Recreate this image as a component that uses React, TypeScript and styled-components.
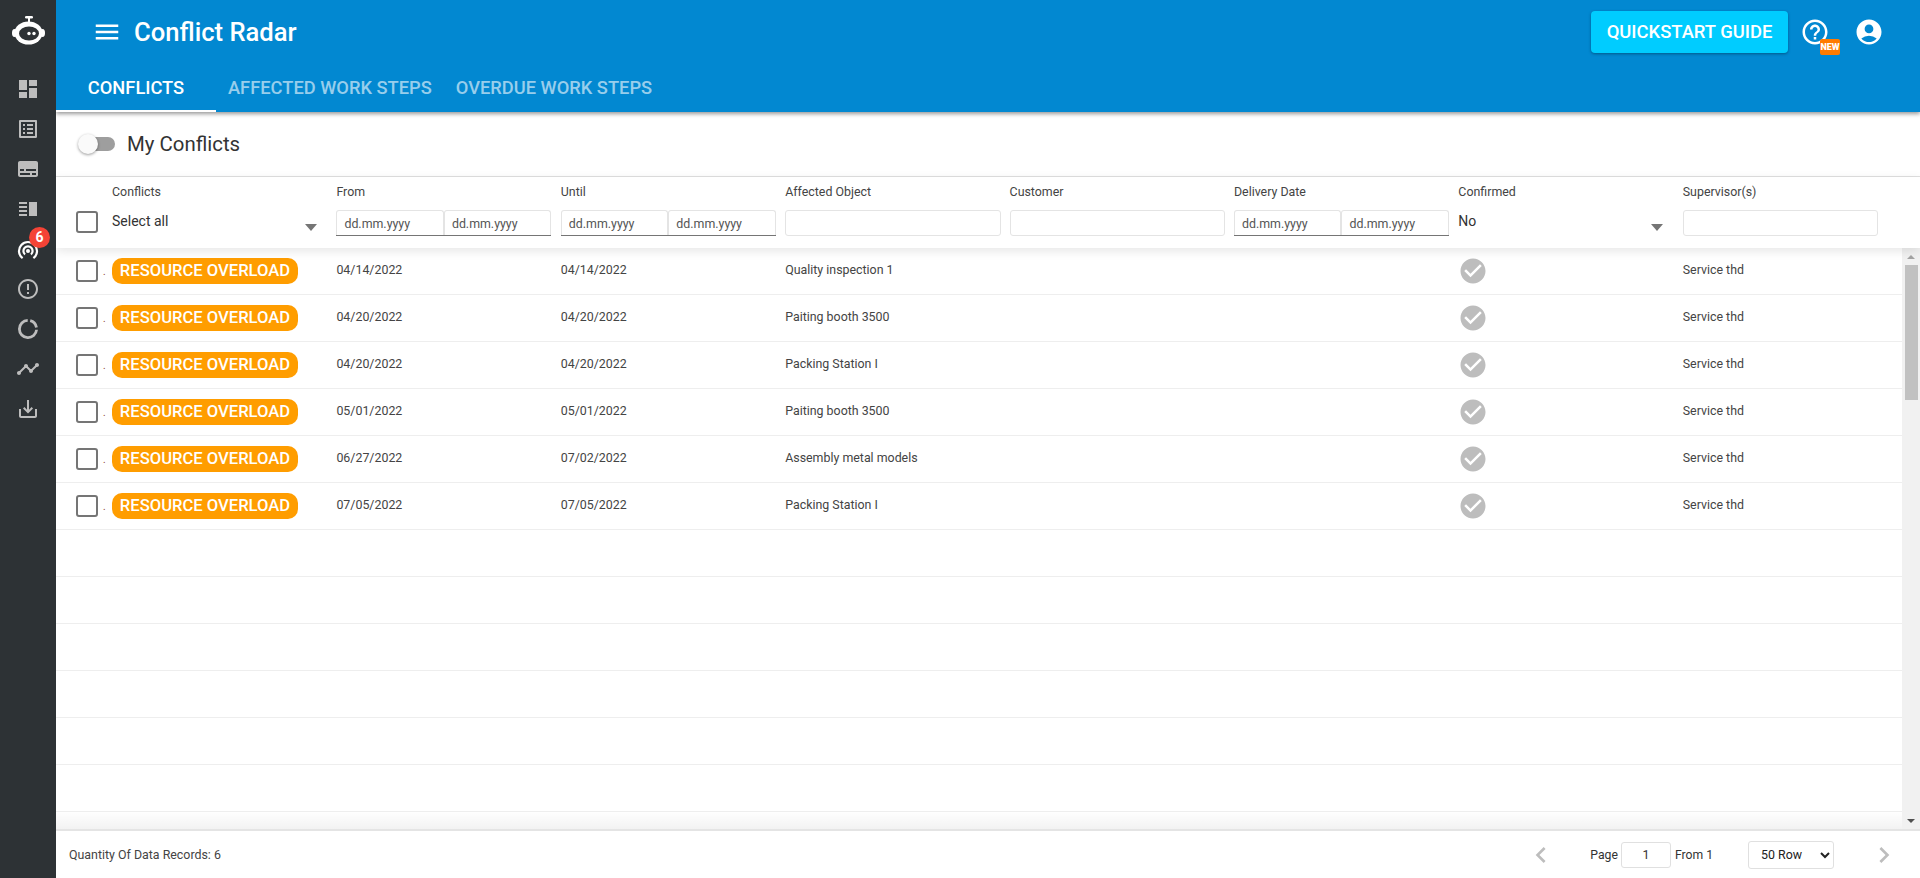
import { FC } from "react";
import styled, { createGlobalStyle } from "styled-components";
import {
  MdAccountCircle,
  MdCheckCircle,
  MdChevronLeft,
  MdChevronRight,
  MdDashboard,
  MdErrorOutline,
  MdHelpOutline,
  MdMenu,
  MdOutlineListAlt,
  MdOutlineSaveAlt,
  MdSubtitles,
  MdTimeline,
  MdVerticalSplit,
} from "react-icons/md";

const GlobalStyle = createGlobalStyle`
  html, body {
    margin: 0;
    height: 100%;
    background: #fff;
    font-family: Roboto, "Liberation Sans", sans-serif;
    color: #3c3c3c;
  }
  * {
    box-sizing: border-box;
  }
`;

const Shell = styled.div`
  display: flex;
  height: 100vh;
  overflow: hidden;
`;

const Sidebar = styled.nav`
  flex: 0 0 56px;
  display: flex;
  flex-direction: column;
  align-items: center;
  background: #2d3235;
  padding-top: 13px;
  z-index: 3;
`;

const Logo = styled.svg`
  width: 36px;
  height: 36px;
  margin-bottom: 20px;
`;

const NavItem = styled.div<{ $active?: boolean }>`
  position: relative;
  width: 56px;
  height: 40px;
  display: flex;
  align-items: center;
  justify-content: center;
  font-size: 24px;
  color: ${(p) => (p.$active ? "#fff" : "#bdbdbd")};
`;

const NavGlyph = styled.svg<{ $drop?: number }>`
  width: 24px;
  height: 24px;
  margin-top: ${(p) => p.$drop ?? 0}px;
`;

const NavBadge = styled.span`
  position: absolute;
  top: -2px;
  left: 29px;
  width: 21px;
  height: 21px;
  border-radius: 50%;
  background: #f44336;
  color: #fff;
  font-size: 14px;
  font-weight: 700;
  line-height: 21px;
  text-align: center;
`;

const Main = styled.main`
  flex: 1;
  min-width: 0;
  display: flex;
  flex-direction: column;
`;

const Header = styled.header`
  flex: 0 0 112px;
  background: #0288d1;
  color: #fff;
  box-shadow: 0 2px 4px rgba(0, 0, 0, 0.4);
  z-index: 2;
`;

const TopBar = styled.div`
  height: 64px;
  display: flex;
  align-items: center;
  padding-left: 36px;
`;

const MenuButton = styled.div`
  font-size: 30px;
  display: flex;
  margin-right: 12px;
`;

const Title = styled.h1`
  flex: 1;
  margin: 0;
  font-size: 25.6px;
  font-weight: 500;
`;

const GuideButton = styled.div`
  width: 197px;
  height: 42px;
  margin-right: 12px;
  border-radius: 4px;
  background: #00ccff;
  box-shadow: 0 1px 3px rgba(0, 0, 0, 0.35);
  font-size: 18.4px;
  font-weight: 500;
  line-height: 42px;
  text-align: center;
`;

const TopIcon = styled.div`
  position: relative;
  display: flex;
  font-size: 30px;
  margin-right: 24px;
  &:last-child {
    margin-right: 36px;
  }
`;

const NewTag = styled.span`
  position: absolute;
  left: 20px;
  top: 22px;
  width: 20px;
  height: 16px;
  border-radius: 2px;
  background: #ff7b00;
  font-size: 9px;
  font-weight: 900;
  line-height: 16px;
  text-align: center;
`;

const Tabs = styled.div`
  display: flex;
  height: 48px;
`;

const Tab = styled.div<{ $active?: boolean }>`
  min-width: 160px;
  padding: 1px 12px 0;
  font-size: 18.3px;
  font-weight: 500;
  line-height: 46px;
  text-align: center;
  color: ${(p) => (p.$active ? "#fff" : "rgba(255, 255, 255, 0.6)")};
  border-bottom: 2px solid ${(p) => (p.$active ? "#fff" : "transparent")};
  &:not(:first-child) {
    min-width: 0;
  }
`;

const Toolbar = styled.div`
  flex: 0 0 65px;
  display: flex;
  align-items: center;
  padding-left: 24px;
  gap: 12px;
  border-bottom: 1px solid #e0e0e0;
  font-size: 20.4px;
  color: #333;
`;

const SwitchTrack = styled.div`
  position: relative;
  width: 35px;
  height: 14px;
  border-radius: 7px;
  background: #9e9e9e;
`;

const SwitchThumb = styled.span`
  position: absolute;
  left: -2px;
  top: -3px;
  width: 20px;
  height: 20px;
  border-radius: 50%;
  background: #fafafa;
  box-shadow: 0 1px 3px rgba(0, 0, 0, 0.4);
`;

const columns = "56px repeat(8, 224.4px)";

const TableHead = styled.div`
  flex: 0 0 71px;
  display: grid;
  grid-template-columns: ${columns};
  box-shadow: 0 3px 10px rgba(0, 0, 0, 0.1);
  z-index: 1;
  font-size: 12.4px;
`;

const HeadCell = styled.div`
  padding-top: 7px;
  min-width: 0;
`;

const HeadLabel = styled.div`
  height: 26px;
  line-height: 15px;
  color: #444;
`;

const CheckCell = styled.div`
  display: flex;
  align-items: center;
  padding-left: 20px;
`;

const HeadCheck = styled(CheckCell)`
  align-items: flex-start;
  padding-top: 34px;
`;

const Box = styled.span`
  flex: 0 0 22px;
  height: 22px;
  border: 2.5px solid #757575;
  border-radius: 3px;
  background: #fff;
`;

const Dot = styled.span`
  margin: 2px 0 0 5px;
  font-size: 10px;
  line-height: 12px;
  color: #8a3a2a;
`;

const SelectText = styled.div`
  display: flex;
  justify-content: space-between;
  width: 205px;
  padding-top: 2px;
  font-size: 14px;
  line-height: 18px;
  color: #333;
`;

const Caret = styled.span`
  width: 0;
  height: 0;
  margin-top: 12px;
  border-left: 6.5px solid transparent;
  border-right: 6.5px solid transparent;
  border-top: 7px solid #757575;
`;

const FilterInput = styled.input<{ $width?: number }>`
  display: block;
  width: ${(p) => (p.$width ? `${p.$width}px` : "100%")};
  min-width: 0;
  height: 26px;
  padding: 0 7px;
  border: 1px solid #e4e4e4;
  border-radius: 3px;
  background: #fff;
  font-family: inherit;
  font-size: 12.4px;
  outline: none;
  &::placeholder {
    color: #555;
    opacity: 1;
  }
`;

const DateRange = styled.div`
  display: flex;
  width: 215px;
  height: 26px;
  border-bottom: 1px solid #757575;

  ${FilterInput} {
    height: 25px;
    border-bottom: none;
    border-radius: 3px 3px 0 0;
  }
`;

const Body = styled.div`
  flex: 1;
  min-height: 0;
  display: flex;
  position: relative;
`;

const Rows = styled.div`
  flex: 1;
  min-width: 0;
  overflow: hidden;
`;

const Row = styled.div`
  height: 47px;
  display: grid;
  grid-template-columns: ${columns};
  border-bottom: 1px solid #eee;
  font-size: 12.4px;
  color: #444;
`;

const Cell = styled.div`
  display: flex;
  align-items: center;
  padding-bottom: 3px;
`;

const Pill = styled.span`
  width: 186px;
  height: 26px;
  border-radius: 10px;
  background: #ff9d00;
  color: #fff;
  font-size: 16.6px;
  font-weight: 500;
  line-height: 25px;
  text-align: center;
  margin-top: 3px;
`;

const ConfirmedIcon = styled(MdCheckCircle)`
  font-size: 30px;
  color: #bdbdbd;
  margin-top: 3px;
`;

const BottomFade = styled.div`
  position: absolute;
  left: 0;
  right: 18px;
  bottom: 0;
  height: 18px;
  background: linear-gradient(rgba(0, 0, 0, 0), rgba(0, 0, 0, 0.05));
`;

const Scrollbar = styled.div`
  flex: 0 0 18px;
  display: flex;
  flex-direction: column;
  align-items: center;
  background: #f1f1f1;
`;

const ScrollArrow = styled.span<{ $down?: boolean }>`
  flex: 0 0 17px;
  display: flex;
  align-items: center;
  justify-content: center;
  margin-top: ${(p) => (p.$down ? "auto" : "0")};
  &::before {
    content: "";
    border-left: 4px solid transparent;
    border-right: 4px solid transparent;
    ${(p) => (p.$down ? "border-top: 4px solid #505050;" : "border-bottom: 4px solid #a3a3a3;")}
  }
`;

const ScrollThumb = styled.span`
  width: 13px;
  height: 135px;
  background: #c1c1c1;
`;

const Footer = styled.footer`
  flex: 0 0 49px;
  display: flex;
  align-items: center;
  padding: 0 20px 0 13px;
  border-top: 2px solid #e4e4e4;
  font-size: 12.4px;
  color: #444;
`;

const Records = styled.div`
  flex: 1;
`;

const Pager = styled.div`
  display: flex;
  align-items: center;
  font-size: 12.2px;
  color: #333;
`;

const PageArrow = styled.span`
  display: flex;
  font-size: 32px;
  color: #bdbdbd;
`;

const PageLabel = styled.span`
  margin-left: 33px;
`;

const PageInput = styled.input`
  width: 50px;
  height: 26px;
  margin: 0 4px 0 3px;
  border: 1px solid #e0e0e0;
  border-radius: 3px;
  text-align: center;
  font-family: inherit;
  font-size: 12.4px;
  color: #333;
`;

const RowSelect = styled.select`
  width: 86px;
  height: 28px;
  margin: 0 34px 0 35px;
  padding-left: 8px;
  border: 1px solid #e0e0e0;
  border-radius: 3px;
  background: #fff;
  font-family: inherit;
  font-size: 12.4px;
  color: #222;
`;

type Conflict = {
  from: string;
  until: string;
  object: string;
};

const conflicts: Conflict[] = [
  { from: "04/14/2022", until: "04/14/2022", object: "Quality inspection 1" },
  { from: "04/20/2022", until: "04/20/2022", object: "Paiting booth 3500" },
  { from: "04/20/2022", until: "04/20/2022", object: "Packing Station I" },
  { from: "05/01/2022", until: "05/01/2022", object: "Paiting booth 3500" },
  { from: "06/27/2022", until: "07/02/2022", object: "Assembly metal models" },
  { from: "07/05/2022", until: "07/05/2022", object: "Packing Station I" },
];

const RobotLogo = () => (
  <Logo viewBox="0 0 36 36">
    <rect x="15" y="3" width="8" height="2.6" rx="1.3" fill="#fff" />
    <rect x="18" y="5" width="2" height="4" fill="#fff" />
    <ellipse cx="4.5" cy="20" rx="2.5" ry="4" fill="#fff" />
    <ellipse cx="32.5" cy="20" rx="2.5" ry="4" fill="#fff" />
    <ellipse cx="18.5" cy="20" rx="14" ry="11.5" fill="#fff" />
    <ellipse cx="19" cy="20.5" rx="10" ry="7" fill="#2d3235" />
    <circle cx="19" cy="20.5" r="1.7" fill="#fff" />
    <circle cx="24" cy="20.5" r="1.7" fill="#fff" />
  </Logo>
);

const RadarGlyph = () => (
  <NavGlyph $drop={4} viewBox="0 0 24 24" fill="none" stroke="currentColor" strokeWidth="2.2">
    <circle cx="12" cy="12" r="2" fill="currentColor" stroke="none" />
    <path d="M9 15.5a4.6 4.6 0 1 1 6 0" />
    <path d="M6.6 19.2a9 9 0 1 1 10.8 0" />
  </NavGlyph>
);

const DonutGlyph = () => (
  <NavGlyph viewBox="0 0 24 24" fill="none" stroke="currentColor" strokeWidth="2.8">
    <path d="M14.2 3.7A8.6 8.6 0 0 1 20.47 10.5" />
    <path d="M20.57 12.75A8.6 8.6 0 1 1 11.7 3.4" />
  </NavGlyph>
);

const DateFilter = () => (
  <DateRange>
    <FilterInput placeholder="dd.mm.yyyy" readOnly />
    <FilterInput placeholder="dd.mm.yyyy" readOnly />
  </DateRange>
);

const ConflictRow = ({ conflict }: { conflict?: Conflict }) => (
  <Row>
    <CheckCell>
      {conflict && <Box />}
      {conflict && <Dot>.</Dot>}
    </CheckCell>
    <Cell>{conflict && <Pill>RESOURCE OVERLOAD</Pill>}</Cell>
    <Cell>{conflict?.from}</Cell>
    <Cell>{conflict?.until}</Cell>
    <Cell>{conflict?.object}</Cell>
    <Cell />
    <Cell />
    <Cell>{conflict && <ConfirmedIcon />}</Cell>
    <Cell>{conflict && "Service thd"}</Cell>
  </Row>
);

const App: FC = () => {
  const emptyRows = Array.from({ length: 7 });

  return (
    <Shell>
      <GlobalStyle />
      <Sidebar>
        <RobotLogo />
        <NavItem><MdDashboard /></NavItem>
        <NavItem><MdOutlineListAlt /></NavItem>
        <NavItem><MdSubtitles /></NavItem>
        <NavItem><MdVerticalSplit /></NavItem>
        <NavItem $active>
          <RadarGlyph />
          <NavBadge>6</NavBadge>
        </NavItem>
        <NavItem><MdErrorOutline /></NavItem>
        <NavItem><DonutGlyph /></NavItem>
        <NavItem><MdTimeline /></NavItem>
        <NavItem><MdOutlineSaveAlt /></NavItem>
      </Sidebar>
      <Main>
        <Header>
          <TopBar>
            <MenuButton><MdMenu /></MenuButton>
            <Title>Conflict Radar</Title>
            <GuideButton>QUICKSTART GUIDE</GuideButton>
            <TopIcon>
              <MdHelpOutline />
              <NewTag>NEW</NewTag>
            </TopIcon>
            <TopIcon><MdAccountCircle /></TopIcon>
          </TopBar>
          <Tabs>
            <Tab $active>CONFLICTS</Tab>
            <Tab>AFFECTED WORK STEPS</Tab>
            <Tab>OVERDUE WORK STEPS</Tab>
          </Tabs>
        </Header>
        <Toolbar>
          <SwitchTrack><SwitchThumb /></SwitchTrack>
          My Conflicts
        </Toolbar>
        <TableHead>
          <HeadCheck><Box /></HeadCheck>
          <HeadCell>
            <HeadLabel>Conflicts</HeadLabel>
            <SelectText>Select all<Caret /></SelectText>
          </HeadCell>
          <HeadCell>
            <HeadLabel>From</HeadLabel>
            <DateFilter />
          </HeadCell>
          <HeadCell>
            <HeadLabel>Until</HeadLabel>
            <DateFilter />
          </HeadCell>
          <HeadCell>
            <HeadLabel>Affected Object</HeadLabel>
            <FilterInput $width={216} readOnly />
          </HeadCell>
          <HeadCell>
            <HeadLabel>Customer</HeadLabel>
            <FilterInput $width={215} readOnly />
          </HeadCell>
          <HeadCell>
            <HeadLabel>Delivery Date</HeadLabel>
            <DateFilter />
          </HeadCell>
          <HeadCell>
            <HeadLabel>Confirmed</HeadLabel>
            <SelectText>No<Caret /></SelectText>
          </HeadCell>
          <HeadCell>
            <HeadLabel>Supervisor(s)</HeadLabel>
            <FilterInput $width={195} readOnly />
          </HeadCell>
        </TableHead>
        <Body>
          <Rows>
            {conflicts.map((conflict, index) => (
              <ConflictRow conflict={conflict} key={index} />
            ))}
            {emptyRows.map((_, index) => (
              <ConflictRow key={index} />
            ))}
          </Rows>
          <BottomFade />
          <Scrollbar>
            <ScrollArrow />
            <ScrollThumb />
            <ScrollArrow $down />
          </Scrollbar>
        </Body>
        <Footer>
          <Records>Quantity Of Data Records: 6</Records>
          <Pager>
            <PageArrow><MdChevronLeft /></PageArrow>
            <PageLabel>Page</PageLabel>
            <PageInput defaultValue="1" />
            From 1
            <RowSelect defaultValue="50">
              <option value="50">50 Row</option>
            </RowSelect>
            <PageArrow><MdChevronRight /></PageArrow>
          </Pager>
        </Footer>
      </Main>
    </Shell>
  );
};

export default App;
